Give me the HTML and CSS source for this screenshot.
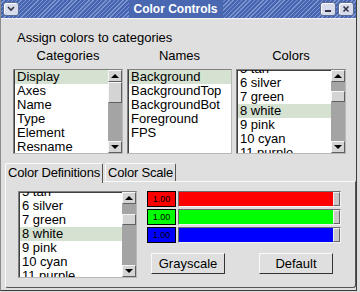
FILE: index.html
```html
<!DOCTYPE html>
<html lang="en">
<head>
	<meta charset="UTF-8">
	<title>Color Controls</title>
	<link rel="stylesheet" href="styles.css">
</head>
<body>
	<div class="window">
		<div class="titlebar">
			<span class="tb-btn">
				<svg width="10" height="8" viewBox="0 0 10 8"><path d="M2 2 L5 5 L8 2" fill="none" stroke="#334" stroke-width="1.6"/></svg>
			</span>
			<div class="title-area"><span class="title">Color Controls</span></div>
			<span class="tb-btn">
				<svg width="10" height="8" viewBox="0 0 10 8"><rect x="2" y="5" width="6" height="2" fill="#334"/></svg>
			</span>
			<span class="tb-btn">
				<svg width="10" height="10" viewBox="0 0 10 10"><path d="M2.5 2.5 L7.5 7.5 M7.5 2.5 L2.5 7.5" stroke="#334" stroke-width="1.6"/></svg>
			</span>
		</div>

		<div class="content">
			<p class="caption">Assign colors to categories</p>

			<div class="pickers">
				<div class="picker">
					<div class="picker-label">Categories</div>
					<div class="listbox">
						<ul class="items">
							<li class="selected">Display</li>
							<li>Axes</li>
							<li>Name</li>
							<li>Type</li>
							<li>Element</li>
							<li>Resname</li>
						</ul>
						<div class="scrollbar">
							<span class="arrow up"></span>
							<div class="trough"><span class="thumb thumb-top"></span></div>
							<span class="arrow down"></span>
						</div>
					</div>
				</div>
				<div class="picker">
					<div class="picker-label">Names</div>
					<div class="listbox">
						<ul class="items">
							<li class="selected">Background</li>
							<li>BackgroundTop</li>
							<li>BackgroundBot</li>
							<li>Foreground</li>
							<li>FPS</li>
						</ul>
					</div>
				</div>
				<div class="picker">
					<div class="picker-label">Colors</div>
					<div class="listbox">
						<ul class="items scrolled">
							<li>5 tan</li>
							<li>6 silver</li>
							<li>7 green</li>
							<li class="selected">8 white</li>
							<li>9 pink</li>
							<li>10 cyan</li>
							<li>11 purple</li>
						</ul>
						<div class="scrollbar">
							<span class="arrow up"></span>
							<div class="trough"><span class="thumb thumb-mid"></span></div>
							<span class="arrow down"></span>
						</div>
					</div>
				</div>
			</div>

			<div class="tabs">
				<span class="tab active">Color Definitions</span>
				<span class="tab">Color Scale</span>
			</div>
			<div class="tab-panel">
				<div class="listbox defs">
					<ul class="items scrolled-more">
						<li>5 tan</li>
						<li>6 silver</li>
						<li>7 green</li>
						<li class="selected">8 white</li>
						<li>9 pink</li>
						<li>10 cyan</li>
						<li>11 purple</li>
					</ul>
					<div class="scrollbar">
						<span class="arrow up"></span>
						<div class="trough"><span class="thumb thumb-low"></span></div>
						<span class="arrow down"></span>
					</div>
				</div>
				<div class="editor">
					<div class="channel">
						<span class="value red">1.00</span>
						<div class="slider"><span class="fill red"></span><span class="handle"></span></div>
					</div>
					<div class="channel">
						<span class="value green">1.00</span>
						<div class="slider"><span class="fill green"></span><span class="handle"></span></div>
					</div>
					<div class="channel">
						<span class="value blue">1.00</span>
						<div class="slider"><span class="fill blue"></span><span class="handle"></span></div>
					</div>
					<div class="actions">
						<button>Grayscale</button>
						<button>Default</button>
					</div>
				</div>
			</div>
		</div>
	</div>
</body>
</html>
```

FILE: styles.css
```css
body {
	margin: 0;
	background: #dedede;
	font-family: "Liberation Sans", Arial, sans-serif;
	font-size: 13px;
	color: #000;
}

/* Window frame */
.window {
	width: 357px;
	height: 291px;
	box-sizing: border-box;
	background: #dfdfdf;
	border-left: 1px solid #8c8c8c;
	border-right: 1px solid #3c3c3c;
	border-bottom: 1px solid #3c3c3c;
}

/* Title bar with striped blue fill */
.titlebar {
	display: flex;
	align-items: center;
	height: 18px;
	padding: 0 2px;
	gap: 2px;
	background: repeating-linear-gradient(135deg, #4765b0 0 2px, #7d95cf 2px 3px);
	border-bottom: 1px solid #f4f4f4;
}

.tb-btn {
	display: flex;
	align-items: center;
	justify-content: center;
	width: 14px;
	height: 12px;
	border: 1px solid #5a6b94;
	border-radius: 3px;
	background: #d6dceb;
	box-shadow: inset 1px 1px 0 #fff;
}

.title-area {
	flex: 1;
	display: flex;
	justify-content: center;
	padding-left: 12px;
}

.title {
	padding: 0 5px;
	background: #4a68b1;
	color: #fff;
	font-weight: bold;
	font-size: 12px;
	line-height: 18px;
}

.content {
	padding: 0 0 0 3px;
}

.caption {
	margin: 11px 0 0 13px;
	line-height: 15px;
}

/* The three pickers */
.pickers {
	display: grid;
	grid-template-columns: 110px 105px 110px;
	column-gap: 4px;
	margin: 3px 0 0 9px;
}

.picker-label {
	text-align: center;
	line-height: 15px;
	margin-bottom: 6px;
}

.listbox {
	display: flex;
	height: 85px;
	box-sizing: border-box;
	background: #fff;
	border: 1px solid #808080;
	border-right-color: #b8b8b8;
	border-bottom-color: #b8b8b8;
	box-shadow: inset 1px 1px 0 #404040;
	overflow: hidden;
}

.items {
	flex: 1;
	margin: 0 0 0 1px;
	padding: 0;
	list-style: none;
	overflow: hidden;
	white-space: nowrap;
}

.items li {
	height: 14px;
	line-height: 14px;
	padding-left: 2px;
}

.items li.selected {
	background: #d5e1d1;
}

.items.scrolled li:first-child {
	margin-top: -8px;
}

.items.scrolled-more li:first-child {
	margin-top: -7px;
}

/* Scrollbars */
.scrollbar {
	display: flex;
	flex-direction: column;
	width: 14px;
	background: #a4a4a4;
}

.arrow {
	position: relative;
	height: 12px;
	box-sizing: border-box;
	background: #d4d4d4;
	border: 1px solid #f6f6f6;
	border-right-color: #606060;
	border-bottom-color: #606060;
}

.arrow:after {
	content: "";
	position: absolute;
	left: 2px;
	border-left: 4px solid transparent;
	border-right: 4px solid transparent;
}

.arrow.up:after {
	top: 3px;
	border-bottom: 4px solid #000;
}

.arrow.down:after {
	top: 3px;
	border-top: 4px solid #000;
}

.trough {
	flex: 1;
	display: flex;
	flex-direction: column;
}

.thumb {
	height: 11px;
	box-sizing: border-box;
	background: #d4d4d4;
	border: 1px solid #f6f6f6;
	border-right-color: #606060;
	border-bottom-color: #606060;
}

.thumb-top {
	height: 21px;
}

.thumb-mid {
	margin-top: 9px;
}

.thumb-low {
	margin-top: 10px;
}

/* Tabs */
.tabs {
	display: flex;
	gap: 2px;
	margin: 9px 0 0 1px;
	height: 18px;
}

.tab {
	padding: 0 2px;
	line-height: 17px;
	letter-spacing: -0.2px;
	border: 1px solid #fafafa;
	border-right-color: #555;
	border-bottom: none;
	border-radius: 2px 2px 0 0;
	background: #dfdfdf;
}

.tab.active {
	position: relative;
	z-index: 1;
	height: 19px;
}

.tab-panel {
	display: flex;
	width: 351px;
	height: 107px;
	box-sizing: border-box;
	margin-left: 1px;
	padding: 9px 14px 0 12px;
	gap: 10px;
	border: 1px solid #fafafa;
	border-right-color: #555;
	border-bottom-color: #555;
	border-radius: 0 0 3px 3px;
}

.listbox.defs {
	width: 119px;
	height: 87px;
}

.editor {
	flex: 1;
	display: flex;
	flex-direction: column;
	gap: 2px;
}

.channel {
	display: flex;
	gap: 2px;
	height: 16px;
}

.value {
	width: 29px;
	box-sizing: border-box;
	border: 1px solid #000;
	font-size: 9px;
	line-height: 14px;
	text-align: center;
}

.slider {
	flex: 1;
	display: flex;
	border: 1px solid #6c6c6c;
	border-right-color: #f2f2f2;
	border-bottom-color: #f2f2f2;
}

.fill {
	flex: 1;
}

.red { background: #ff0000; }
.green { background: #00ff00; }
.blue { background: #0000ff; }

.handle {
	width: 7px;
	box-sizing: border-box;
	background: #c8c8c8;
	border: 1px solid #eee;
	border-right-color: #666;
	border-bottom-color: #666;
}

.actions {
	display: flex;
	justify-content: space-between;
	padding: 0 8px 0 4px;
	margin-top: 8px;
}

button {
	width: 74px;
	height: 21px;
	padding: 0;
	font-family: inherit;
	font-size: 13px;
	background: #dfdfdf;
	border: 1px solid #fafafa;
	border-right-color: #333;
	border-bottom-color: #333;
}
```
